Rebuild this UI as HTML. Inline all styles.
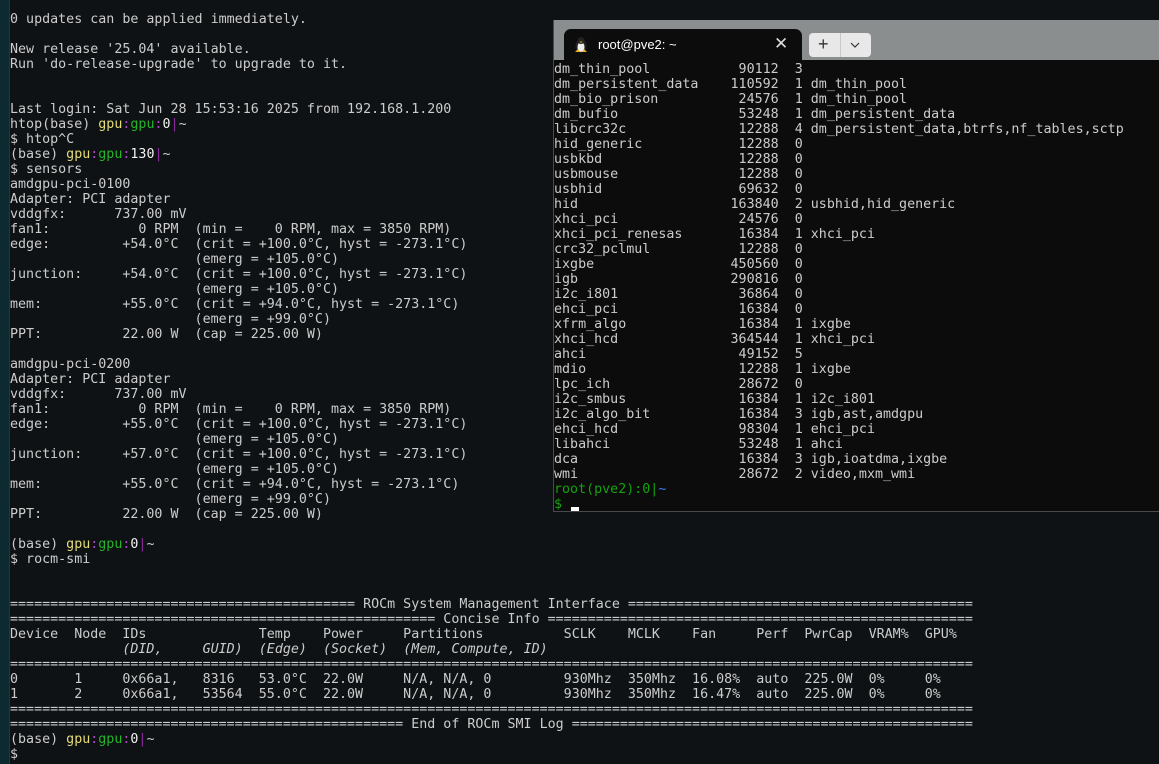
<!DOCTYPE html>
<html><head><meta charset="utf-8"><style>
html,body{margin:0;padding:0;width:1159px;height:764px;overflow:hidden;background:#0e1214;}
pre{margin:0;font-family:"DejaVu Sans Mono","Liberation Mono",monospace;font-size:13.33px;line-height:15px;color:#cccccc;position:absolute;white-space:pre;}
.strip{position:absolute;left:0;top:0;width:9px;height:764px;background:#0d2a30;border-right:1px solid #2c3236;}
.y{color:#e6dc7a}.m{color:#b148c6}.g{color:#26b52a}.p{color:#8a2a9a}.w{color:#f2f2f2}
.G{color:#13a10e}.B{color:#3b78ff}
i{font-style:italic}
#win{position:absolute;left:553px;top:20px;width:606px;height:491px;background:#0c0c0c;border-left:1px solid #4a4a4a;border-bottom:1px solid #4a4a4a;}
#bar{position:absolute;left:0;top:0;width:606px;height:40px;background:#8b8e8f;}
#tab{position:absolute;left:10px;top:9px;width:238px;height:31px;background:#0c0c0c;border-radius:7px 7px 0 0;}
#tab span{position:absolute;left:34px;top:8px;font:13px "Liberation Sans",sans-serif;color:#fff;}
#tab .x{left:210px;top:5px;font-size:17px;color:#ddd}
#btns{position:absolute;left:255px;top:13px;width:62px;height:24px;background:#e8e8e8;border-radius:4px;}
#btns .sep{position:absolute;left:31px;top:0;width:1px;height:24px;background:#c8c8c8}
</style></head><body>
<div class="strip"></div>
<pre style="left:10px;top:12px">0 updates can be applied immediately.

New release '25.04' available.
Run 'do-release-upgrade' to upgrade to it.


Last login: Sat Jun 28 15:53:16 2025 from 192.168.1.200
htop(base) <span class="y">gpu</span><span class="m">:</span><span class="g">gpu</span><span class="m">:</span><span class="w">0</span><span class="p">|</span>~
$ htop^C
(base) <span class="y">gpu</span><span class="m">:</span><span class="g">gpu</span><span class="m">:</span><span class="w">130</span><span class="p">|</span>~
$ sensors
amdgpu-pci-0100
Adapter: PCI adapter
vddgfx:      737.00 mV
fan1:           0 RPM  (min =    0 RPM, max = 3850 RPM)
edge:         +54.0°C  (crit = +100.0°C, hyst = -273.1°C)
                       (emerg = +105.0°C)
junction:     +54.0°C  (crit = +100.0°C, hyst = -273.1°C)
                       (emerg = +105.0°C)
mem:          +55.0°C  (crit = +94.0°C, hyst = -273.1°C)
                       (emerg = +99.0°C)
PPT:          22.00 W  (cap = 225.00 W)

amdgpu-pci-0200
Adapter: PCI adapter
vddgfx:      737.00 mV
fan1:           0 RPM  (min =    0 RPM, max = 3850 RPM)
edge:         +55.0°C  (crit = +100.0°C, hyst = -273.1°C)
                       (emerg = +105.0°C)
junction:     +57.0°C  (crit = +100.0°C, hyst = -273.1°C)
                       (emerg = +105.0°C)
mem:          +55.0°C  (crit = +94.0°C, hyst = -273.1°C)
                       (emerg = +99.0°C)
PPT:          22.00 W  (cap = 225.00 W)

(base) <span class="y">gpu</span><span class="m">:</span><span class="g">gpu</span><span class="m">:</span><span class="w">0</span><span class="p">|</span>~
$ rocm-smi


=========================================== ROCm System Management Interface ===========================================
===================================================== Concise Info =====================================================
Device  Node  IDs              Temp    Power     Partitions          SCLK    MCLK    Fan     Perf  PwrCap  VRAM%  GPU%
              <i>(DID,     GUID)</i>  <i>(Edge)</i>  <i>(Socket)</i>  <i>(Mem, Compute, ID)</i>
========================================================================================================================
0       1     0x66a1,   8316   53.0°C  22.0W     N/A, N/A, 0         930Mhz  350Mhz  16.08%  auto  225.0W  0%     0%
1       2     0x66a1,   53564  55.0°C  22.0W     N/A, N/A, 0         930Mhz  350Mhz  16.47%  auto  225.0W  0%     0%
========================================================================================================================
================================================= End of ROCm SMI Log ==================================================
(base) <span class="y">gpu</span><span class="m">:</span><span class="g">gpu</span><span class="m">:</span><span class="w">0</span><span class="p">|</span>~
$</pre>
<div id="win">
<div id="bar">
 <div id="tab"><svg style="position:absolute;left:10px;top:7px" width="14" height="17" viewBox="0 0 14 17"><ellipse cx="7" cy="10" rx="5.5" ry="6.5" fill="#222"/><ellipse cx="7" cy="11" rx="3.5" ry="5" fill="#eee"/><circle cx="7" cy="4.5" r="3.5" fill="#222"/><path d="M1 16 L4 13 L6 16Z M13 16 L10 13 L8 16Z" fill="#f0b020"/><path d="M5.5 5.5 L8.5 5.5 L7 7Z" fill="#f0b020"/></svg><span>root@pve2: ~</span><span class="x">✕</span></div>
 <div id="btns"><span style="position:absolute;left:9px;top:1px;font:18px 'Liberation Sans',sans-serif;color:#333">+</span><div class="sep"></div><svg style="position:absolute;left:41px;top:9px" width="10" height="6" viewBox="0 0 10 6"><path d="M1 1 L5 5 L9 1" stroke="#333" stroke-width="1.2" fill="none"/></svg></div>
</div>
<pre style="left:0px;top:42px">dm_thin_pool           90112  3
dm_persistent_data    110592  1 dm_thin_pool
dm_bio_prison          24576  1 dm_thin_pool
dm_bufio               53248  1 dm_persistent_data
libcrc32c              12288  4 dm_persistent_data,btrfs,nf_tables,sctp
hid_generic            12288  0
usbkbd                 12288  0
usbmouse               12288  0
usbhid                 69632  0
hid                   163840  2 usbhid,hid_generic
xhci_pci               24576  0
xhci_pci_renesas       16384  1 xhci_pci
crc32_pclmul           12288  0
ixgbe                 450560  0
igb                   290816  0
i2c_i801               36864  0
ehci_pci               16384  0
xfrm_algo              16384  1 ixgbe
xhci_hcd              364544  1 xhci_pci
ahci                   49152  5
mdio                   12288  1 ixgbe
lpc_ich                28672  0
i2c_smbus              16384  1 i2c_i801
i2c_algo_bit           16384  3 igb,ast,amdgpu
ehci_hcd               98304  1 ehci_pci
libahci                53248  1 ahci
dca                    16384  3 igb,ioatdma,ixgbe
wmi                    28672  2 video,mxm_wmi
<span class="G">root(pve2):0|</span><span class="B">~</span>
<span class="G">$</span></pre>
<div style="position:absolute;left:17px;top:487px;width:8px;height:4px;background:#fff"></div>
</div>
</body></html>
